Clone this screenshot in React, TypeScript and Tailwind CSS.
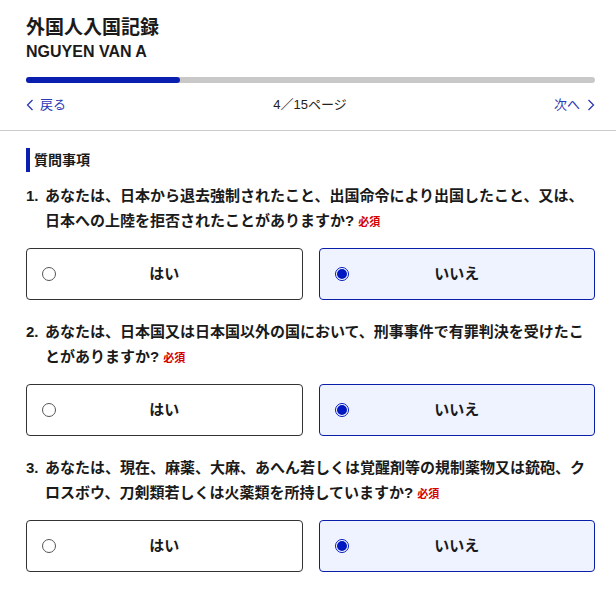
const questions = [
  {
    no: '1.',
    text: 'あなたは、日本から退去強制されたこと、出国命令により出国したこと、又は、日本への上陸を拒否されたことがありますか?',
  },
  {
    no: '2.',
    text: 'あなたは、日本国又は日本国以外の国において、刑事事件で有罪判決を受けたことがありますか?',
  },
  {
    no: '3.',
    text: 'あなたは、現在、麻薬、大麻、あへん若しくは覚醒剤等の規制薬物又は銃砲、クロスボウ、刀剣類若しくは火薬類を所持していますか?',
  },
];

function Option({ label, checked }: { label: string; checked: boolean }) {
  return (
    <div
      className={
        checked
          ? 'relative flex h-[52px] items-center rounded-[4px] border border-[#0a1fa8] bg-[#eff3ff]'
          : 'relative flex h-[52px] items-center rounded-[4px] border border-[#333333] bg-white'
      }
    >
      <div className="absolute left-[15px] top-1/2 -translate-y-1/2">
        {checked ? (
          <div className="flex h-[14px] w-[14px] items-center justify-center rounded-full border border-[#0017c1] bg-white">
            <div className="h-[10px] w-[10px] rounded-full bg-[#0017c1]" />
          </div>
        ) : (
          <div className="h-[14px] w-[14px] rounded-full border border-[#555555] bg-white" />
        )}
      </div>
      <div className="w-full text-center text-[15px] font-bold text-[#1a1a1a]">{label}</div>
    </div>
  );
}

export default function App() {
  return (
    <div className="min-h-[604px] bg-white font-['Liberation_Sans','Noto_Sans_CJK_JP',sans-serif] text-[#1a1a1a]">
      <div className="border-b border-[#cccccc] pl-[26px] pr-[21px] pt-[16px] pb-[15px]">
        <div className="text-[19px] font-bold leading-[24px]">外国人入国記録</div>
        <div className="text-[16px] font-bold leading-[24px]">NGUYEN VAN A</div>
        <div className="mt-[13px] h-[6px] w-full rounded-full bg-[#c8c8c8]">
          <div className="h-[6px] w-[27%] rounded-full bg-[#0a1fb0]" />
        </div>
        <div className="mt-[12px] flex h-[20px] items-center justify-between text-[13px]">
          <div className="flex items-center gap-[6px] text-[#2b38b8]">
            <svg width="8" height="12" viewBox="0 0 8 12" fill="none">
              <path d="M6.5 1 L1.5 6 L6.5 11" stroke="#2b38b8" strokeWidth="1.3" />
            </svg>
            <span>戻る</span>
          </div>
          <div className="text-[#222222]">4／15ページ</div>
          <div className="flex items-center gap-[7px] text-[#2b38b8]">
            <span>次へ</span>
            <svg width="8" height="12" viewBox="0 0 8 12" fill="none">
              <path d="M1.5 1 L6.5 6 L1.5 11" stroke="#2b38b8" strokeWidth="1.3" />
            </svg>
          </div>
        </div>
      </div>

      <div className="pl-[26px] pr-[21px] pt-[17px]">
        <div className="flex h-[24px] items-center border-l-[4px] border-[#0a1fb0] pl-[4px] text-[14px] font-bold">
          質問事項
        </div>

        {questions.map((q, i) => (
          <div key={q.no} className={i === 0 ? 'mt-[11px]' : 'mt-[19px]'}>
            <div className="flex text-[15px] font-bold leading-[25px]">
              <div className="w-[19px] shrink-0">{q.no}</div>
              <div>
                {q.text}
                <span className="ml-[4px] inline-block align-baseline text-[11px] font-bold leading-[14px] text-[#d40000]">
                  必須
                </span>
              </div>
            </div>
            <div className="mt-[15px] grid grid-cols-2 gap-[16px]">
              <Option label="はい" checked={false} />
              <Option label="いいえ" checked={true} />
            </div>
          </div>
        ))}
      </div>
    </div>
  );
}
